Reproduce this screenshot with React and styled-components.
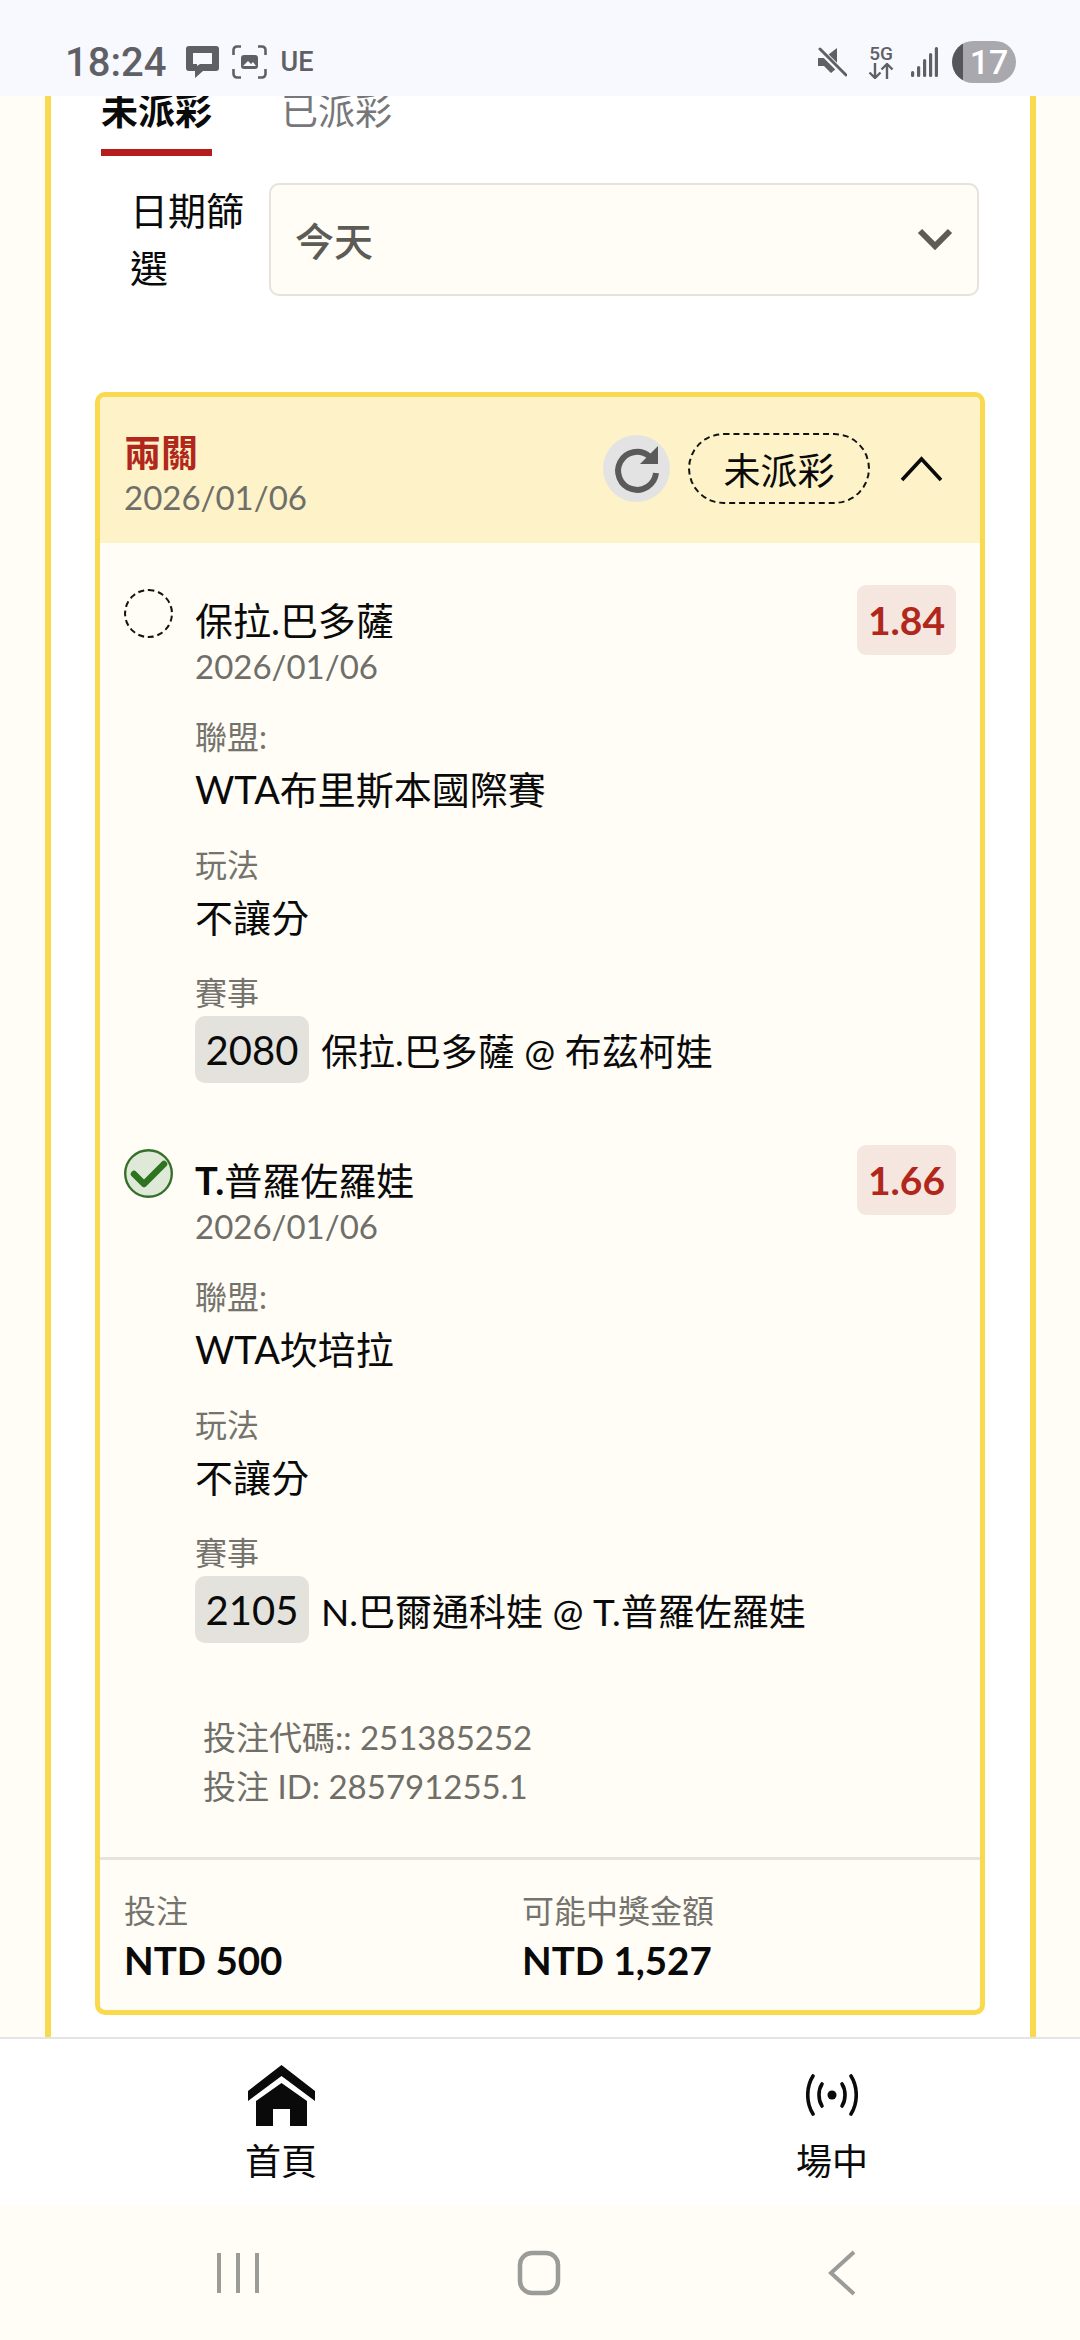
import React from 'react';
import styled, { createGlobalStyle } from 'styled-components';

const GlobalStyle = createGlobalStyle`
  html, body {
    margin: 0;
    padding: 0;
    background: #fffdf6;
  }
  * {
    box-sizing: border-box;
  }
`;

const Screen = styled.div`
  width: 1080px;
  height: 2340px;
  display: flex;
  flex-direction: column;
  overflow: hidden;
  font-family: Lato, "Noto Sans CJK TC", sans-serif;
  color: #0a0a0a;
  background: #fffdf6;
`;

const StatusBar = styled.div`
  height: 96px;
  flex: none;
  display: flex;
  align-items: center;
  justify-content: space-between;
  padding: 28px 64px 0 65px;
  background: #f8f8ff;
  color: #5f6066;
`;

const StatusGroup = styled.div`
  display: flex;
  align-items: center;
  gap: ${(p) => p.$gap}px;
`;

const Clock = styled.span`
  font-family: Roboto, sans-serif;
  font-size: 40px;
  font-weight: 500;
  margin-right: 7px;
`;

const Carrier = styled.span`
  font-family: Roboto, sans-serif;
  font-size: 27px;
  font-weight: 500;
`;

const NetworkStack = styled.div`
  width: 26px;
  margin-left: 4px;
  display: flex;
  flex-direction: column;
  align-items: center;
  font-family: Roboto, sans-serif;
  font-size: 19px;
  font-weight: 500;
  line-height: 18px;
`;

const BatteryPill = styled.div`
  width: 64px;
  height: 42px;
  margin-left: -3px;
  border-radius: 21px;
  padding-left: 10px;
  background: linear-gradient(90deg, #55555b 11px, #a8a8ae 11px);
  color: #fff;
  font-family: Roboto, sans-serif;
  font-size: 34px;
  font-weight: 500;
  display: flex;
  align-items: center;
  justify-content: center;
`;

const Main = styled.div`
  flex: 1;
  min-height: 0;
  overflow: hidden;
  padding: 0 44px 0 45px;
`;

const Panel = styled.div`
  height: 100%;
  background: #fff;
  border-left: 6px solid #f9d94e;
  border-right: 6px solid #f9d94e;
  padding: 0 45px 0 44px;
`;

const Tabs = styled.div`
  display: flex;
  gap: 69px;
  height: 59px;
  margin: 0 0 0 6px;
`;

const Tab = styled.div`
  height: 60px;
  font-size: 37px;
  line-height: 30px;
  color: ${(p) => (p.$active ? '#0a0a0a' : '#77777a')};
  font-weight: ${(p) => (p.$active ? 700 : 400)};
  border-bottom: ${(p) => (p.$active ? '7px solid #b71c1c' : 'none')};
`;

const FilterRow = styled.div`
  display: flex;
  align-items: center;
  gap: 25px;
  margin-top: 27px;
  padding: 0 6px 0 35px;
`;

const FilterLabel = styled.div`
  width: 114px;
  font-size: 38px;
  line-height: 57px;
  flex: none;
`;

const Select = styled.div`
  flex: 1;
  height: 113px;
  border: 2px solid #e6e3da;
  border-radius: 10px;
  background: #fffdf6;
  display: flex;
  align-items: center;
  justify-content: space-between;
  padding: 0 24px;
  font-size: 39px;
  font-weight: 500;
  color: #5c5b55;
`;

const Card = styled.div`
  margin-top: 96px;
  border: 5px solid #f9d94e;
  border-radius: 10px;
  background: #fffdf6;
  overflow: hidden;
`;

const CardHeader = styled.div`
  height: 146px;
  background: #fdf2c8;
  display: flex;
  align-items: center;
  justify-content: space-between;
  padding: 0 37px 0 24px;
`;

const HeaderText = styled.div`
  padding-top: 10px;
`;

const CardTitle = styled.div`
  font-size: 37px;
  line-height: 44px;
  font-weight: 700;
  color: #b1271b;
`;

const MutedDate = styled.div`
  font-size: 33px;
  line-height: 44px;
  color: #6f6e68;
`;

const HeaderActions = styled.div`
  display: flex;
  align-items: center;
  padding-bottom: 3px;
`;

const RefreshCircle = styled.div`
  width: 67px;
  height: 67px;
  border-radius: 50%;
  background: #e3e3e3;
  margin-right: 18px;
`;

const StateBadge = styled.div`
  width: 182px;
  height: 71px;
  border: 2px dashed #111;
  border-radius: 36px;
  display: flex;
  align-items: center;
  justify-content: center;
  font-size: 37px;
  margin-right: 30px;
`;

const Legs = styled.div`
  padding: 42px 24px 0;
`;

const Leg = styled.div`
  display: grid;
  grid-template-columns: 71px 1fr auto;
  align-items: start;
  margin-bottom: 62px;
`;

const Radio = styled.div`
  width: 49px;
  height: 49px;
  margin-top: 4px;
  border-radius: 50%;
  border: ${(p) => (p.$done ? 'none' : '2px dashed #111')};
`;

const LegName = styled.div`
  font-size: 38px;
  line-height: 47px;
  margin-top: 12px;
`;

const LegLatin = styled.span`
  font-weight: 700;
`;

const Field = styled.div`
  margin-top: 27px;
`;

const FieldLabel = styled.div`
  font-size: 32px;
  line-height: 44px;
  color: #74736d;
`;

const FieldValue = styled.div`
  font-size: 38px;
  line-height: 54px;
  margin-top: 3px;
`;

const MatchRow = styled.div`
  display: flex;
  align-items: center;
  font-size: 37px;
  gap: 12px;
  margin-top: 1px;
`;

const MatchCode = styled.span`
  width: 114px;
  height: 67px;
  border-radius: 10px;
  background: #e3e2dd;
  display: flex;
  align-items: center;
  justify-content: center;
  font-size: 40px;
`;

const Odds = styled.div`
  width: 99px;
  height: 70px;
  border-radius: 9px;
  background: #f5e7e0;
  color: #b1271b;
  font-size: 39px;
  font-weight: 700;
  display: flex;
  align-items: center;
  justify-content: center;
`;

const BetMeta = styled.div`
  padding: 8px 0 0 103px;
  font-size: 33px;
  line-height: 49px;
  color: #6f6e68;
`;

const CardFooter = styled.div`
  margin-top: 46px;
  border-top: 3px solid #e6e4dd;
  height: 153px;
  display: grid;
  grid-template-columns: 398px 1fr;
  padding: 29px 24px 0;
`;

const FooterLabel = styled.div`
  font-size: 32px;
  line-height: 44px;
  color: #74736d;
`;

const FooterValue = styled.div`
  font-size: 38.5px;
  line-height: 54px;
  font-weight: 700;
`;

const BottomNav = styled.div`
  flex: none;
  height: 168px;
  background: #fff;
  border-top: 2px solid #e4e4e4;
  display: grid;
  grid-template-columns: 1fr 1fr;
`;

const NavItem = styled.div`
  display: flex;
  flex-direction: column;
  align-items: center;
  padding-top: 20px;
  margin-left: ${(p) => p.$shift}px;
`;

const NavIconSlot = styled.div`
  height: 72px;
  display: flex;
  align-items: center;
  justify-content: center;
`;

const NavLabel = styled.div`
  font-size: 36px;
  line-height: 54px;
  margin-top: 3px;
`;

const SystemNav = styled.div`
  flex: none;
  height: 135px;
  background: #fffdf6;
  display: flex;
  align-items: center;
  padding: 0 0 0 216px;
`;

const SysSlot = styled.div`
  width: ${(p) => p.$w}px;
  display: flex;
`;

const MuteIcon = () => (
  <svg width="29" height="30" viewBox="0 0 29 30" fill="currentColor">
    <path d="M0 11h6L19 1v20L13 26 6 19H0z" />
    <path d="M1 2l27 27" stroke="#f8f8ff" strokeWidth="6" />
    <path d="M2 2l26 26" stroke="currentColor" strokeWidth="3" strokeLinecap="round" />
  </svg>
);

const SignalIcon = () => (
  <svg width="27" height="30" viewBox="0 0 27 30" fill="currentColor">
    <rect x="0" y="24" width="3.2" height="6" rx="1.5" />
    <rect x="6" y="19" width="3.2" height="11" rx="1.5" />
    <rect x="12" y="12" width="3.2" height="18" rx="1.5" />
    <rect x="18" y="6" width="3.2" height="24" rx="1.5" />
    <rect x="23.8" y="0" width="3.2" height="30" rx="1.5" />
  </svg>
);

const NetArrows = () => (
  <svg width="26" height="16" viewBox="0 0 26 16" fill="none" stroke="currentColor" strokeWidth="2.4">
    <path d="M7 0v15M1.5 9.5L7 15l5.5-5.5M19 16V1M13.500 6.500L19 1l5.500 5.500" />
  </svg>
);

const MessageIcon = () => (
  <svg width="33" height="32" viewBox="0 0 33 32" fill="none">
    <path d="M3 0h27a3 3 0 0 1 3 3v19a3 3 0 0 1-3 3H17l-8 7v-7H3a3 3 0 0 1-3-3V3a3 3 0 0 1 3-3z" fill="currentColor" />
    <path d="M7 7h19v11H14l-3 2v-2H7z" fill="#f8f8ff" />
  </svg>
);

const ScreenshotIcon = () => (
  <svg width="35" height="34" viewBox="0 0 35 34" fill="none" stroke="currentColor" strokeWidth="2.6">
    <path d="M9 1.500H5A3.500 3.500 0 0 0 1.500 5v5M26 1.500h4A3.500 3.500 0 0 1 33.500 5v5M9 32.500H5A3.500 3.500 0 0 1 1.500 29v-5M26 32.500h4a3.500 3.500 0 0 0 3.500-3.500v-5" />
    <rect x="9" y="10" width="17" height="14" rx="3" fill="currentColor" stroke="none" />
    <path d="M11 21l5-5 3 3 2-2 3 4z" fill="#f8f8ff" stroke="none" />
  </svg>
);

const RefreshIcon = () => (
  <svg width="67" height="67" viewBox="0 0 67 67" fill="none">
    <path d="M46 21A19 19 0 1 0 53 38" stroke="#5a5a5a" strokeWidth="6" />
    <path d="M55 11v18H37z" fill="#5a5a5a" />
  </svg>
);

const ChevronUp = () => (
  <svg width="43" height="26" viewBox="0 0 43 26" fill="none" stroke="#0a0a0a" strokeWidth="3.6">
    <path d="M2 24L21.500 3 41 24" />
  </svg>
);

const ChevronDown = () => (
  <svg width="36" height="24" viewBox="0 0 36 24" fill="none" stroke="#5c5b55" strokeWidth="6">
    <path d="M3 4l15 15L33 4" />
  </svg>
);

const CheckBadge = () => (
  <svg width="49" height="49" viewBox="0 0 49 49" fill="none">
    <circle cx="24.500" cy="24.500" r="23.300" fill="#dfe9d8" stroke="#35702a" strokeWidth="2.400" />
    <path d="M10 25l10 10L40 15" stroke="#2e7420" strokeWidth="6.500" strokeLinecap="round" strokeLinejoin="round" />
  </svg>
);

const HomeIcon = () => (
  <svg width="67" height="61" viewBox="0 0 67 61" fill="#0a0a0a">
    <path d="M0 26L33.500 0 67 26v10L33.500 11 0 36z" />
    <path d="M8 36L33.500 18 59 36v25H42V44H25v17H8z" />
  </svg>
);

const LiveIcon = () => (
  <svg width="52" height="42" viewBox="0 0 52 42" fill="none" stroke="#0a0a0a" strokeWidth="3.600" strokeLinecap="round">
    <circle cx="26" cy="21" r="4.500" fill="#0a0a0a" stroke="none" />
    <path d="M16 10c-4 6-4 16 0 22M36 10c4 6 4 16 0 22" />
    <path d="M7 2C0 13 0 29 7 40M45 2c7 11 7 27 0 38" />
  </svg>
);

const legs = [
  {
    name: '保拉.巴多薩',
    odds: '1.84',
    league: 'WTA布里斯本國際賽',
    code: '2080',
    match: '保拉.巴多薩 @ 布茲柯娃',
  },
  {
    latin: 'T.',
    name: '普羅佐羅娃',
    odds: '1.66',
    league: 'WTA坎培拉',
    code: '2105',
    match: 'N.巴爾通科娃 @ T.普羅佐羅娃',
    done: true,
  },
];

const App = () => (
  <Screen>
    <GlobalStyle />
    <StatusBar>
      <StatusGroup $gap={13}>
        <Clock>18:24</Clock>
        <MessageIcon />
        <ScreenshotIcon />
        <Carrier>UE</Carrier>
      </StatusGroup>
      <StatusGroup $gap={17}>
        <MuteIcon />
        <NetworkStack>
          5G
          <NetArrows />
        </NetworkStack>
        <SignalIcon />
        <BatteryPill>17</BatteryPill>
      </StatusGroup>
    </StatusBar>

    <Main>
      <Panel>
        <Tabs>
          <Tab $active>未派彩</Tab>
          <Tab>已派彩</Tab>
        </Tabs>
        <FilterRow>
          <FilterLabel>日期篩選</FilterLabel>
          <Select>
            今天
            <ChevronDown />
          </Select>
        </FilterRow>

        <Card>
          <CardHeader>
            <HeaderText>
              <CardTitle>兩關</CardTitle>
              <MutedDate>2026/01/06</MutedDate>
            </HeaderText>
            <HeaderActions>
              <RefreshCircle>
                <RefreshIcon />
              </RefreshCircle>
              <StateBadge>未派彩</StateBadge>
              <ChevronUp />
            </HeaderActions>
          </CardHeader>

          <Legs>
            {legs.map((leg) => (
              <Leg key={leg.code}>
                <Radio $done={leg.done}>{leg.done && <CheckBadge />}</Radio>
                <div>
                  <LegName>
                    {leg.latin && <LegLatin>{leg.latin}</LegLatin>}
                    {leg.name}
                  </LegName>
                  <MutedDate>2026/01/06</MutedDate>
                  <Field>
                    <FieldLabel>聯盟:</FieldLabel>
                    <FieldValue>{leg.league}</FieldValue>
                  </Field>
                  <Field>
                    <FieldLabel>玩法</FieldLabel>
                    <FieldValue>不讓分</FieldValue>
                  </Field>
                  <Field>
                    <FieldLabel>賽事</FieldLabel>
                    <MatchRow>
                      <MatchCode>{leg.code}</MatchCode>
                      {leg.match}
                    </MatchRow>
                  </Field>
                </div>
                <Odds>{leg.odds}</Odds>
              </Leg>
            ))}
          </Legs>

          <BetMeta>
            <div>投注代碼:: 251385252</div>
            <div>投注 ID: 285791255.1</div>
          </BetMeta>

          <CardFooter>
            <div>
              <FooterLabel>投注</FooterLabel>
              <FooterValue>NTD 500</FooterValue>
            </div>
            <div>
              <FooterLabel>可能中獎金額</FooterLabel>
              <FooterValue>NTD 1,527</FooterValue>
            </div>
          </CardFooter>
        </Card>
      </Panel>
    </Main>

    <BottomNav>
      <NavItem $shift={22}>
        <NavIconSlot>
          <HomeIcon />
        </NavIconSlot>
        <NavLabel>首頁</NavLabel>
      </NavItem>
      <NavItem $shift={44}>
        <NavIconSlot>
          <LiveIcon />
        </NavIconSlot>
        <NavLabel>場中</NavLabel>
      </NavItem>
    </BottomNav>

    <SystemNav>
      <SysSlot $w={301}>
        <svg width="44" height="44" viewBox="0 0 44 44" stroke="#9b9b98" strokeWidth="4">
          <path d="M3 2v40M22 2v40M41 2v40" />
        </svg>
      </SysSlot>
      <SysSlot $w={311}>
        <svg width="44" height="46" viewBox="0 0 44 46" fill="none" stroke="#9b9b98" strokeWidth="4.500">
          <rect x="3" y="3" width="38" height="40" rx="12" />
        </svg>
      </SysSlot>
      <SysSlot $w={40}>
        <svg width="28" height="46" viewBox="0 0 28 46" fill="none" stroke="#9b9b98" strokeWidth="4">
          <path d="M26 2L3 23l23 21" />
        </svg>
      </SysSlot>
    </SystemNav>
  </Screen>
);

export default App;
